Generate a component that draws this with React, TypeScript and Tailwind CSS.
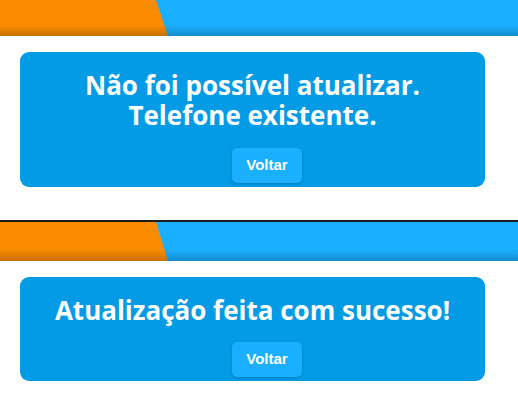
import React from 'react';

const TopBar: React.FC<{ height: string }> = ({ height }) => {
  return (
    <div className={`relative w-full bg-[#1ab0ff] ${height}`}>
      <div className="h-full w-[168px] bg-[#fb8c00] [clip-path:polygon(0_0,156px_0,168px_100%,0_100%)]" />
      {/* bottom shade */}
      <div className="pointer-events-none absolute inset-0 bg-gradient-to-b from-transparent from-70% to-black/20" />
    </div>
  );
};

const MessageCard: React.FC<{ lines: string[]; height: string }> = ({ lines, height }) => {
  return (
    <div className={`ml-5 w-[465px] rounded-[9px] bg-[#039be5] pt-[18px] ${height} flex flex-col items-center`}>
      <h2 className="text-center font-['Open_Sans',sans-serif] text-[26px] font-bold leading-[30px] text-white">
        {lines.map((l, i) => (
          <React.Fragment key={l}>
            {i > 0 && <br />}
            {l}
          </React.Fragment>
        ))}
      </h2>
      <button className="mt-auto mb-1 ml-[29px] h-[35px] rounded-[5px] bg-[#1ab0ff] px-3.5 font-['Liberation_Sans',sans-serif] text-[15px] font-bold text-white shadow-[0_1px_3px_rgba(0,0,0,0.2)]">
        Voltar
      </button>
    </div>
  );
};

const App: React.FC = () => {
  return (
    <div className="h-[413px] w-[518px] overflow-hidden bg-white">
      {/* Erro */}
      <TopBar height="h-[36px]" />
      <div className="pt-4">
        <MessageCard lines={['Não foi possível atualizar.', 'Telefone existente.']} height="h-[135px]" />
      </div>
      <div className="h-[33px]" />
      <div className="h-[2px] bg-[#1c1c1c]" />

      {/* Sucesso */}
      <TopBar height="h-[39px]" />
      <div className="pt-4">
        <MessageCard lines={['Atualização feita com sucesso!']} height="h-[104px]" />
      </div>
    </div>
  );
};

export default App;
